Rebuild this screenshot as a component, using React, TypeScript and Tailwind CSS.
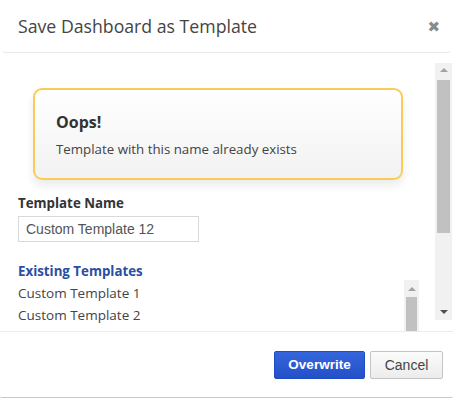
import React from "react";

const existing = ["Custom Template 1", "Custom Template 2"];

function ScrollBar({ thumbTop, thumbHeight, height, showDown }: { thumbTop: number; thumbHeight: number; height: number; showDown: boolean }) {
  return (
    <div className="relative w-[17px] bg-[#f1f1f1] shrink-0" style={{ height }}>
      <div className="flex justify-center pt-[5px]">
        <div className="w-0 h-0 border-l-[4px] border-r-[4px] border-b-[4px] border-l-transparent border-r-transparent border-b-[#a3a3a3]" />
      </div>
      <div className="absolute left-[2px] right-[2px] bg-[#c1c1c1]" style={{ top: thumbTop, height: thumbHeight }} />
      {showDown && (
        <div className="absolute bottom-[6px] left-0 right-0 flex justify-center">
          <div className="w-0 h-0 border-l-[4px] border-r-[4px] border-t-[4px] border-l-transparent border-r-transparent border-t-[#505050]" />
        </div>
      )}
    </div>
  );
}

export default function App() {
  return (
    <div className="w-[454px] h-[400px] bg-white font-['Open_Sans',sans-serif] overflow-hidden">
      <div className="w-[453px] h-[398px] bg-white border-b border-[#c8c8c8] rounded-b-[2px] flex flex-col">
        {/* header */}
        <div className="h-[53px] border-b border-[#e8e8e8] rounded-b-[4px] mx-[2px] flex items-center justify-between pl-[16px] pr-[11px] shrink-0">
          <h2 className="text-[17.7px] text-[#444] leading-none pt-[1px]">Save Dashboard as Template</h2>
          <span className="text-[#8a8a8a] text-[15px] font-bold leading-none pt-[3px] font-['DejaVu_Sans',sans-serif]">✖</span>
        </div>

        {/* body */}
        <div className="h-[278px] flex shrink-0 overflow-hidden">
          <div className="flex-1 pl-[18px] pt-[35px]">
            <div className="ml-[15px] w-[370px] h-[92px] rounded-[9px] border-2 border-[#f9cd55] bg-gradient-to-b from-white to-[#f2f2f2] shadow-[0_6px_10px_rgba(0,0,0,0.08)] pl-[21px] pt-[21px]">
              <div className="text-[16px] font-bold text-[#333] leading-[22px]">Oops!</div>
              <div className="text-[13.3px] text-[#444] leading-[18px] mt-[7px]">Template with this name already exists</div>
            </div>
            <div className="text-[13.3px] font-bold text-[#333] leading-[18px] mt-[14px]">Template Name</div>
            <input
              readOnly
              value="Custom Template 12"
              className="block mt-[4px] w-[181px] h-[26px] border border-[#d9d9d9] px-[7px] text-[14px] text-[#555] font-['Liberation_Sans',Arial,sans-serif] outline-none"
            />
            <div className="text-[13.3px] font-bold text-[#2b4ea3] leading-[18px] mt-[20px]">Existing Templates</div>
            <div className="flex w-[402px] h-[50px]">
              <div className="flex-1 pt-[2px]">
                {existing.map((t) => (
                  <div key={t} className="text-[13.5px] text-[#444] leading-[22px]">{t}</div>
                ))}
              </div>
              <div className="w-[15px] mr-[1px] bg-[#f1f1f1] h-[60px] relative">
                <div className="flex justify-center pt-[7px]">
                  <div className="w-0 h-0 border-l-[4px] border-r-[4px] border-b-[4px] border-l-transparent border-r-transparent border-b-[#a3a3a3]" />
                </div>
                <div className="absolute left-[2px] right-[2px] top-[17px] h-[40px] bg-[#c1c1c1]" />
              </div>
            </div>
          </div>
          <div className="pt-[10px] pr-[1px]">
            <ScrollBar thumbTop={17} thumbHeight={153} height={257} showDown />
          </div>
        </div>

        {/* footer */}
        <div className="flex-1 border-t border-[#ececec] flex items-start justify-end gap-[5px] pt-[19px] pr-[10px]">
          <button className="w-[91px] h-[28px] rounded-[2px] border border-[#1f4cc0] bg-gradient-to-b from-[#3565dc] to-[#2350c8] text-white text-[13.5px] font-bold font-['Liberation_Sans',Arial,sans-serif]">
            Overwrite
          </button>
          <button className="w-[73px] h-[28px] rounded-[2px] border border-[#c4c4c4] bg-gradient-to-b from-[#fbfbfb] to-[#ececec] text-[#444] text-[14px] font-['Liberation_Sans',Arial,sans-serif]">
            Cancel
          </button>
        </div>
      </div>
    </div>
  );
}
